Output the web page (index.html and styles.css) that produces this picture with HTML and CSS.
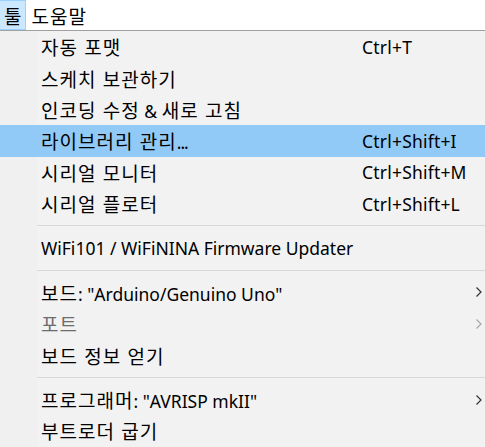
FILE: index.html
```html
<!DOCTYPE html>
<html lang="ko">
<head>
<meta charset="utf-8">
<link rel="stylesheet" href="styles.css">
</head>
<body>
<div class="menubar">
  <span class="mb-item active"><span class="ko">툴</span></span>
  <span class="mb-item"><span class="ko">도움말</span></span>
</div>
<div class="menu">
  <div class="row"><span class="label"><span class="ko">자동 포맷</span></span><span class="key">Ctrl+T</span></div>
  <div class="row"><span class="label"><span class="ko">스케치 보관하기</span></span></div>
  <div class="row"><span class="label"><span class="ko">인코딩 수정</span> &amp; <span class="ko">새로 고침</span></span></div>
  <div class="row hover"><span class="label"><span class="ko">라이브러리 관리</span><span class="dots">...</span></span><span class="key">Ctrl+Shift+I</span></div>
  <div class="row"><span class="label"><span class="ko">시리얼 모니터</span></span><span class="key">Ctrl+Shift+M</span></div>
  <div class="row"><span class="label"><span class="ko">시리얼 플로터</span></span><span class="key">Ctrl+Shift+L</span></div>
  <div class="sep"></div>
  <div class="row"><span class="label">WiFi101 / WiFiNINA Firmware Updater</span></div>
  <div class="sep"></div>
  <div class="row"><span class="label"><span class="ko">보드</span>: "Arduino/Genuino Uno"</span><svg class="arrow" viewBox="0 0 6 10" width="6" height="10"><polyline points="0.5,0.5 5,5 0.5,9.5"/></svg></div>
  <div class="row disabled"><span class="label"><span class="ko">포트</span></span><svg class="arrow" viewBox="0 0 6 10" width="6" height="10"><polyline points="0.5,0.5 5,5 0.5,9.5"/></svg></div>
  <div class="row"><span class="label"><span class="ko">보드 정보 얻기</span></span></div>
  <div class="sep"></div>
  <div class="row"><span class="label"><span class="ko">프로그래머</span>: "AVRISP mkII"</span><svg class="arrow" viewBox="0 0 6 10" width="6" height="10"><polyline points="0.5,0.5 5,5 0.5,9.5"/></svg></div>
  <div class="row"><span class="label"><span class="ko">부트로더 굽기</span></span></div>
</div>
</body>
</html>
```
FILE: styles.css
```css
html, body {
  margin: 0;
  padding: 0;
  background: #f2f2f2;
  overflow: hidden;
}
body {
  font-family: "Noto Sans", "Noto Sans CJK KR", sans-serif;
  font-size: 17.5px;
  color: #000;
  width: 485px;
  height: 447px;
}
.ko {
  font-family: "Noto Sans CJK KR", sans-serif;
  font-size: 19px;
  letter-spacing: 1px;
}
.dots {
  letter-spacing: -1px;
}
.menubar {
  display: flex;
  align-items: stretch;
  height: 30px;
  background: #fff;
  border-bottom: 1px solid #a0a0a0;
}
.mb-item {
  display: flex;
  align-items: center;
  padding: 0 3px 0 4px;
  border: 1px solid transparent;
  box-sizing: border-box;
  height: 30px;
}
.mb-item.active {
  background: #cce8ff;
  border-color: #99d1ff;
  border-left: none;
}
.menu {
  background: linear-gradient(to right, #f0f0f0 37px, #f2f2f2 37px);
  height: 416px;
}
.row {
  display: flex;
  align-items: center;
  height: 31.4px;
  padding-left: 41px;
  padding-right: 3px;
}
.row.hover {
  background: #91c9f7;
}
.label {
  width: 321px;
  white-space: nowrap;
}
.key {
  white-space: nowrap;
  letter-spacing: 0.2px;
}
.arrow {
  margin-left: auto;
  fill: none;
  stroke: #333;
  stroke-width: 1.2;
}
.row.disabled {
  color: #6d6d6d;
}
.row.disabled .arrow {
  stroke: #a8a8a8;
}
.sep {
  height: 1px;
  margin: 6px 0 6px 37px;
  background: #d7d7d7;
}
```
